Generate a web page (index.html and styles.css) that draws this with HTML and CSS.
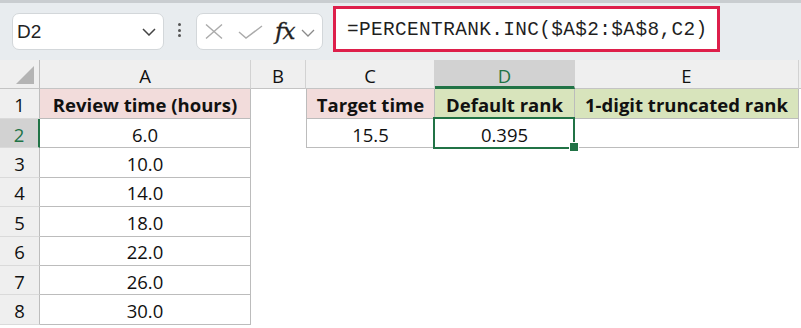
FILE: index.html
```html
<!DOCTYPE html>
<html>
<head>
<meta charset="utf-8">
<link rel="stylesheet" href="styles.css">
</head>
<body>
<div class="app">
  <div class="toolbar">
    <div class="namebox">
      <span class="ref">D2</span>
      <svg class="chev" width="14" height="8" viewBox="0 0 14 8"><path d="M1 1 L7 7 L13 1" fill="none" stroke="#444" stroke-width="1.5"/></svg>
    </div>
    <div class="dots"><i></i><i></i><i></i></div>
    <div class="fxbox">
      <svg class="ic" width="18" height="15" viewBox="0 0 18 15"><path d="M1 0.5 L17 14.5 M17 0.5 L1 14.5" fill="none" stroke="#ababab" stroke-width="1.4"/></svg>
      <svg class="ic" width="25" height="14" viewBox="0 0 25 14"><path d="M1 7 L8 13 L24 1" fill="none" stroke="#ababab" stroke-width="1.4"/></svg>
      <span class="fx">fx</span>
      <svg class="chev2" width="14" height="8" viewBox="0 0 14 8"><path d="M1 1 L7 7 L13 1" fill="none" stroke="#8a8a8a" stroke-width="1.3"/></svg>
    </div>
    <div class="formula">=PERCENTRANK.INC($A$2:$A$8,C2)</div>
  </div>
  <div class="sheet">
    <div class="corner"><span class="tri"></span></div>
    <div class="ch">A</div>
    <div class="ch">B</div>
    <div class="ch">C</div>
    <div class="ch sel">D</div>
    <div class="ch">E</div>
    <div class="ch end"></div>

    <div class="rh">1</div>
    <div class="c bd pink b">Review time (hours)</div>
    <div class="c"></div>
    <div class="c bd bl pink b">Target time</div>
    <div class="c bd green b">Default rank</div>
    <div class="c bd green b">1-digit truncated rank</div>
    <div class="c"></div>

    <div class="rh sel">2</div>
    <div class="c bd">6.0</div>
    <div class="c"></div>
    <div class="c bd bl">15.5</div>
    <div class="c bd active">0.395</div>
    <div class="c bd"></div>
    <div class="c"></div>

    <div class="rh">3</div><div class="c bd">10.0</div><div class="c"></div><div class="c"></div><div class="c"></div><div class="c"></div><div class="c"></div>
    <div class="rh">4</div><div class="c bd">14.0</div><div class="c"></div><div class="c"></div><div class="c"></div><div class="c"></div><div class="c"></div>
    <div class="rh">5</div><div class="c bd">18.0</div><div class="c"></div><div class="c"></div><div class="c"></div><div class="c"></div><div class="c"></div>
    <div class="rh">6</div><div class="c bd">22.0</div><div class="c"></div><div class="c"></div><div class="c"></div><div class="c"></div><div class="c"></div>
    <div class="rh">7</div><div class="c bd">26.0</div><div class="c"></div><div class="c"></div><div class="c"></div><div class="c"></div><div class="c"></div>
    <div class="rh">8</div><div class="c bd">30.0</div><div class="c"></div><div class="c"></div><div class="c"></div><div class="c"></div><div class="c"></div>
  </div>
</div>
</body>
</html>
```
FILE: styles.css
```css
* { box-sizing: border-box; }
html, body { margin: 0; padding: 0; background: #fff; }
body { width: 801px; height: 328px; overflow: hidden; }
.app { width: 801px; height: 328px; overflow: hidden; }

.toolbar {
  height: 60px;
  background: #e8ecef;
  border-top: 3px solid #c9cdd0;
  display: flex;
  align-items: flex-start;
  padding: 3px 0 0 12px;
}
.namebox {
  margin-top: 7px;
  width: 152px;
  height: 37px;
  background: #fff;
  border: 1px solid #d3d7da;
  border-radius: 7px;
  display: flex;
  align-items: center;
  justify-content: space-between;
  padding: 0 7px 0 4px;
  font-family: "Liberation Sans", Arial, sans-serif;
  font-size: 19px;
  color: #222;
}
.chev { margin-top: 1px; }
.dots {
  margin: 17px 0 0 14px;
  width: 4px;
  display: flex;
  flex-direction: column;
  gap: 2.5px;
}
.dots i { display: block; width: 3px; height: 3px; border-radius: 50%; background: #555; }
.fxbox {
  margin: 7px 0 0 14px;
  width: 127px;
  height: 37px;
  background: #fff;
  border: 1px solid #d3d7da;
  border-radius: 7px;
  display: flex;
  align-items: center;
  padding: 0 0 0 8px;
}
.fxbox .ic { margin-right: 15px; }
.fx {
  font-family: "DejaVu Serif", "Liberation Serif", serif;
  font-style: italic;
  font-size: 23px;
  color: #222;
  margin-left: -3px;
  margin-right: 7px;
  line-height: 1;
  letter-spacing: -1px;
  -webkit-text-stroke: 0.3px #222;
}
.chev2 { margin-top: 3px; }
.formula {
  margin: 0 0 0 10px;
  width: 387px;
  height: 46px;
  background: #fff;
  border: 3px solid #dd1f4b;
  font-family: "Liberation Mono", "Courier New", monospace;
  font-size: 19.4px;
  letter-spacing: 0.38px;
  color: #1f1f1f;
  display: flex;
  align-items: center;
  padding: 1px 0 0 11px;
}

.sheet {
  display: grid;
  grid-template-columns: 40px 211px 55px 129px 140px 224px 2px;
  grid-template-rows: 29px 30px repeat(8, 29.4px);
  font-family: "Open Sans", sans-serif;
  font-size: 18.5px;
  color: #111;
}
.corner, .ch {
  background: #efefef;
  border-right: 1px solid #d2d2d2;
  border-bottom: 1px solid #c4c4c4;
}
.corner { position: relative; border-right-color: #bdbdbd; }
.tri {
  position: absolute;
  right: 5px;
  bottom: 4px;
  width: 0; height: 0;
  border-left: 18px solid transparent;
  border-bottom: 18px solid #b4b4b4;
}
.ch {
  display: flex;
  align-items: center;
  justify-content: center;
  padding-top: 2px;
}
.ch.end { border-right: none; }
.ch.sel {
  background: #d2d2d2;
  color: #217346;
  border-bottom: 3px solid #217346;
  padding-top: 4px;
}
.rh {
  background: #efefef;
  border-right: 1px solid #bdbdbd;
  border-bottom: 1px solid #dadada;
  display: flex;
  align-items: center;
  justify-content: center;
  padding-top: 2px;
}
.rh.sel {
  background: #d2d2d2;
  color: #217346;
  border-right: 2px solid #217346;
}
.c {
  display: flex;
  align-items: center;
  justify-content: center;
  padding-top: 2px;
  white-space: nowrap;
}
.bd { border-right: 1px solid #bcbcbc; border-bottom: 1px solid #bcbcbc; }
.bl { border-left: 1px solid #bcbcbc; }
.pink { background: #f2dcdb; }
.green { background: #d8e4bc; }
.b { font-weight: bold; font-size: 18.5px; }
.active { position: relative; }
.active::after {
  content: "";
  position: absolute;
  left: -2px; top: -2px; right: -1px; bottom: -2px;
  border: 2px solid #217346;
}
.active::before {
  content: "";
  position: absolute;
  right: -5px; bottom: -5px;
  width: 8px; height: 8px;
  background: #217346;
  border: 1px solid #fff;
  z-index: 2;
}
```
